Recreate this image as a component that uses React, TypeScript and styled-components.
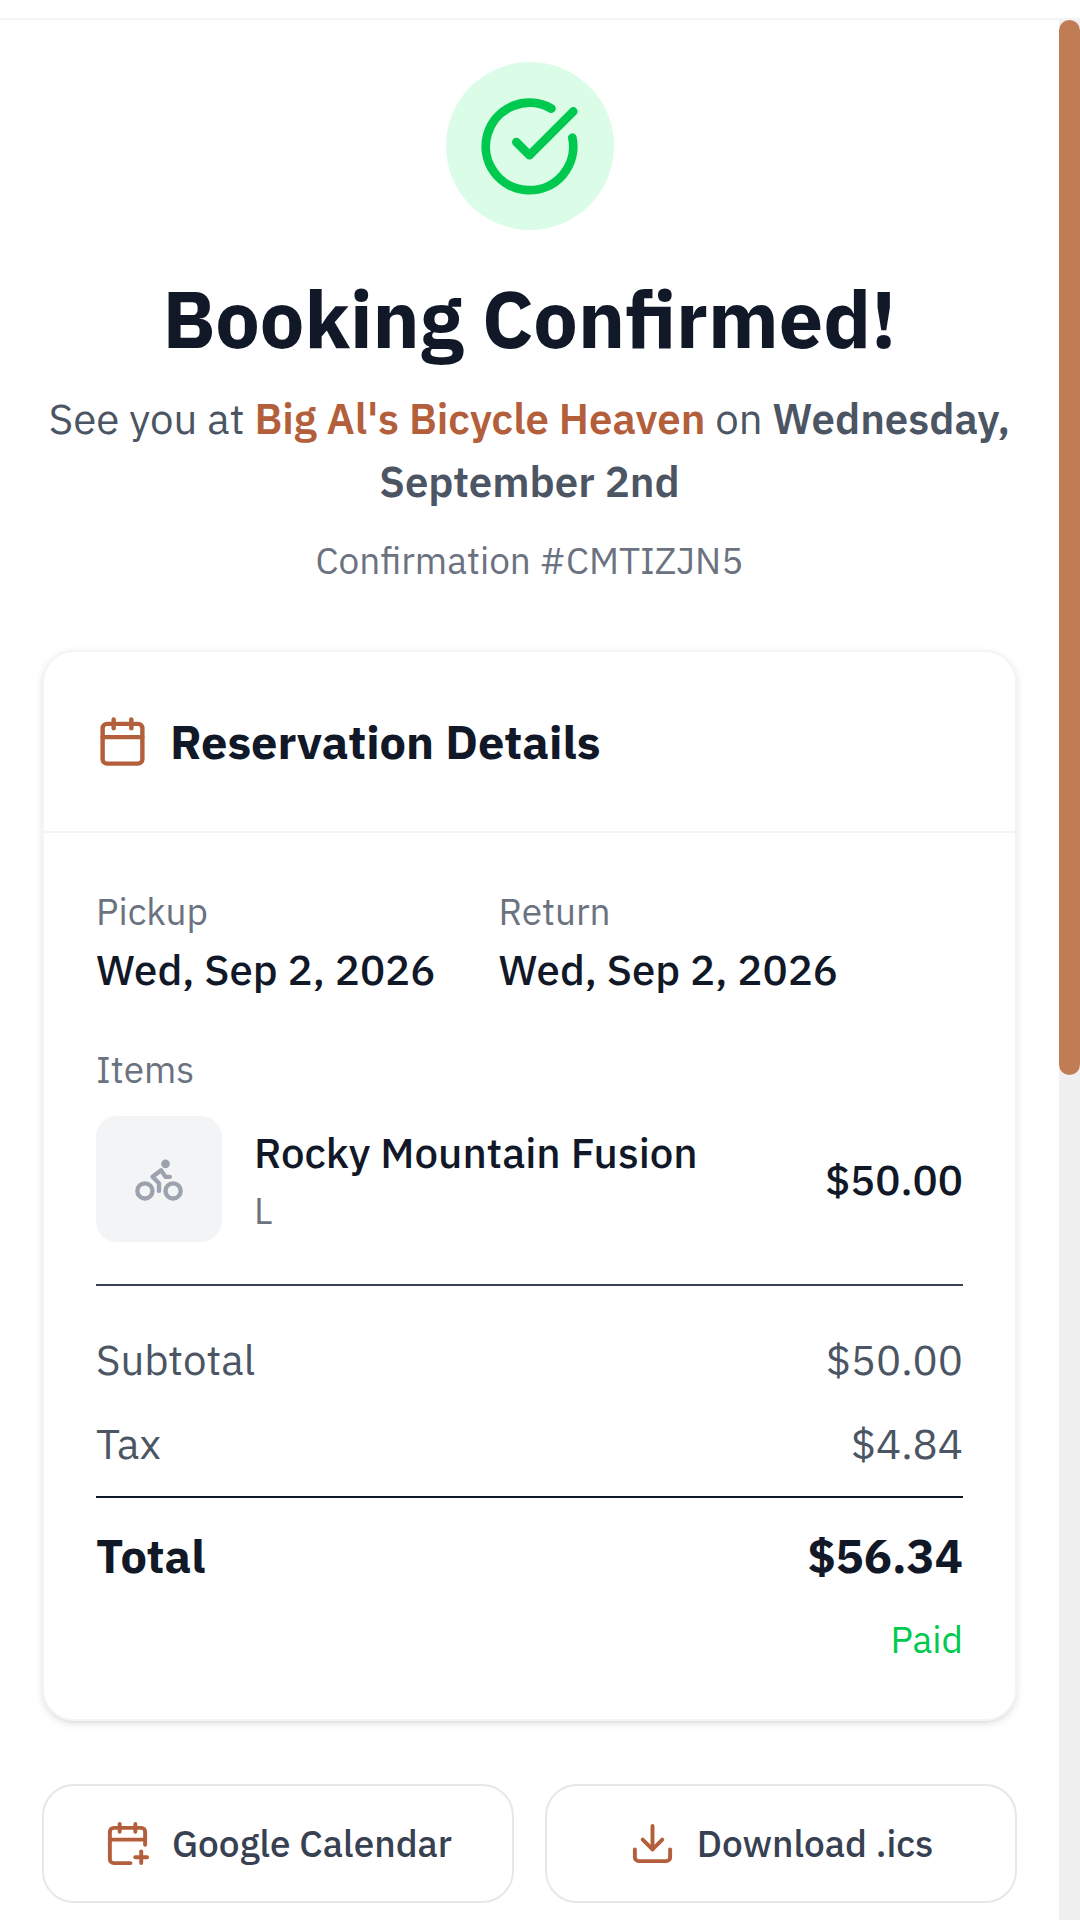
import React from "react";
import styled, { createGlobalStyle, css } from "styled-components";
import { Bike, Calendar, CalendarPlus, CircleCheckBig, Download } from "lucide-react";

const color = {
  ink: "#111827",
  strong: "#374151",
  body: "#4b5563",
  muted: "#6b7280",
  faint: "#9ca3af",
  line: "#f3f4f6",
  outline: "#e5e7eb",
  accent: "#b45f3c",
  thumb: "#c07c54",
  track: "#f0f0f0",
  green: "#00c950",
  greenSoft: "#dbfce7",
};

const GlobalStyle = createGlobalStyle`
  *, *::before, *::after { box-sizing: border-box; }
  body {
    margin: 0;
    background: #fff;
    color: ${color.ink};
    font-family: "IBM Plex Sans", "Noto Sans", sans-serif;
    font-size: 42px;
    line-height: 63px;
  }
  h1, h2, p, dl, dt, dd, ul { margin: 0; padding: 0; }
`;

const small = css`
  font-size: 37px;
  line-height: 53px;
`;

const Page = styled.div`
  display: flex;
  flex-direction: column;
  min-height: 100vh;
`;

const TopEdge = styled.header`
  height: 20px;
  border-bottom: 2px solid ${color.line};
`;

const Viewport = styled.div`
  display: flex;
  flex: 1;
`;

const Main = styled.main`
  flex: 1;
  min-width: 0;
  padding: 42px 42px 16px;
`;

const ScrollTrack = styled.div`
  flex: none;
  width: 21px;
  background: ${color.track};
`;

const ScrollThumb = styled.div`
  height: 55.5%;
  border-radius: 11px;
  background: ${color.thumb};
`;

const Hero = styled.section`
  display: flex;
  flex-direction: column;
  align-items: center;
  text-align: center;
`;

const Badge = styled.div`
  display: grid;
  place-items: center;
  width: 168px;
  height: 168px;
  border-radius: 50%;
  background: ${color.greenSoft};
  color: ${color.green};
`;

const Title = styled.h1`
  margin-top: 42px;
  font-size: 79px;
  line-height: 94px;
  font-weight: 700;
`;

const Lead = styled.p`
  margin-top: 21px;
  color: ${color.body};
`;

const Strong = styled.span<{ $accent?: boolean }>`
  font-weight: 600;
  color: ${(p) => (p.$accent ? color.accent : "inherit")};
`;

const Reference = styled.p`
  ${small}
  margin-top: 21px;
  color: ${color.muted};
`;

const Card = styled.section`
  margin-top: 63px;
  border: 2px solid ${color.line};
  border-radius: 32px;
  background: #fff;
  box-shadow: 0 3px 8px rgba(0, 0, 0, 0.1), 0 3px 5px -3px rgba(0, 0, 0, 0.1);
`;

const CardHeader = styled.div`
  display: flex;
  align-items: center;
  gap: 21px;
  padding: 53px 52px;
  border-bottom: 2px solid ${color.line};

  svg { color: ${color.accent}; }
`;

const CardTitle = styled.h2`
  font-size: 47px;
  line-height: 73px;
  font-weight: 700;
`;

const CardBody = styled.div`
  padding: 52px 52px 53px;
`;

const Dates = styled.dl`
  display: flex;
  gap: 63px;
`;

const DateField = styled.div`
  min-width: 339px;
`;

const Label = styled.dt`
  ${small}
  color: ${color.muted};
`;

const Value = styled.dd`
  font-weight: 500;
`;

const ItemsLabel = styled.p`
  ${small}
  margin-top: 42px;
  color: ${color.muted};
`;

const Items = styled.ul`
  margin-top: 20px;
  list-style: none;
`;

const Item = styled.li`
  display: flex;
  align-items: center;
  gap: 32px;
`;

const Thumbnail = styled.div`
  display: grid;
  place-items: center;
  flex: none;
  width: 126px;
  height: 126px;
  border-radius: 21px;
  background: ${color.line};
  color: ${color.faint};
`;

const ItemInfo = styled.div`
  flex: 1;
  min-width: 0;
`;

const ItemName = styled.p`
  font-weight: 500;
`;

const ItemSize = styled.p`
  ${small}
  color: ${color.muted};
`;

const Totals = styled.dl`
  display: flex;
  flex-direction: column;
  gap: 21px;
  margin-top: 42px;
  padding-top: 42px;
  border-top: 2px solid ${color.strong};
  color: ${color.body};
`;

const TotalRow = styled.div<{ $grand?: boolean }>`
  display: flex;
  justify-content: space-between;
  ${(p) =>
    p.$grand &&
    css`
      padding-top: 21px;
      border-top: 2px solid ${color.ink};
      color: ${color.ink};
      font-size: 47px;
      line-height: 73px;
      font-weight: 700;
    `}
`;

const Paid = styled.p`
  ${small}
  margin-top: 21px;
  text-align: right;
  color: ${color.green};
`;

const Actions = styled.div`
  display: grid;
  grid-template-columns: 1fr 1fr;
  gap: 31px;
  margin-top: 63px;
`;

const ActionButton = styled.button`
  display: flex;
  align-items: center;
  justify-content: center;
  gap: 21px;
  padding: 31px 21px;
  border: 2px solid ${color.outline};
  border-radius: 32px;
  background: #fff;
  color: ${color.strong};
  font-family: inherit;
  ${small}
  font-weight: 500;
  white-space: nowrap;
  cursor: pointer;

  svg { flex: none; color: ${color.accent}; }
`;

export default function App() {
  return (
    <>
      <GlobalStyle />
      <Page>
        <TopEdge />
        <Viewport>
          <Main>
            <Hero>
              <Badge>
                <CircleCheckBig size={105} />
              </Badge>
              <Title>Booking Confirmed!</Title>
              <Lead>
                See you at <Strong $accent>Big Al's Bicycle Heaven</Strong> on{" "}
                <Strong>Wednesday, September 2nd</Strong>
              </Lead>
              <Reference>Confirmation #CMTIZJN5</Reference>
            </Hero>

            <Card>
              <CardHeader>
                <Calendar size={53} />
                <CardTitle>Reservation Details</CardTitle>
              </CardHeader>
              <CardBody>
                <Dates>
                  <DateField>
                    <Label>Pickup</Label>
                    <Value>Wed, Sep 2, 2026</Value>
                  </DateField>
                  <DateField>
                    <Label>Return</Label>
                    <Value>Wed, Sep 2, 2026</Value>
                  </DateField>
                </Dates>
                <ItemsLabel>Items</ItemsLabel>
                <Items>
                  <Item>
                    <Thumbnail>
                      <Bike size={52} />
                    </Thumbnail>
                    <ItemInfo>
                      <ItemName>Rocky Mountain Fusion</ItemName>
                      <ItemSize>L</ItemSize>
                    </ItemInfo>
                    <ItemName>$50.00</ItemName>
                  </Item>
                </Items>
                <Totals>
                  <TotalRow>
                    <dt>Subtotal</dt>
                    <dd>$50.00</dd>
                  </TotalRow>
                  <TotalRow>
                    <dt>Tax</dt>
                    <dd>$4.84</dd>
                  </TotalRow>
                  <TotalRow $grand>
                    <dt>Total</dt>
                    <dd>$56.34</dd>
                  </TotalRow>
                </Totals>
                <Paid>Paid</Paid>
              </CardBody>
            </Card>

            <Actions>
              <ActionButton type="button">
                <CalendarPlus size={47} />
                Google Calendar
              </ActionButton>
              <ActionButton type="button">
                <Download size={47} />
                Download .ics
              </ActionButton>
            </Actions>
          </Main>
          <ScrollTrack aria-hidden="true">
            <ScrollThumb />
          </ScrollTrack>
        </Viewport>
      </Page>
    </>
  );
}
